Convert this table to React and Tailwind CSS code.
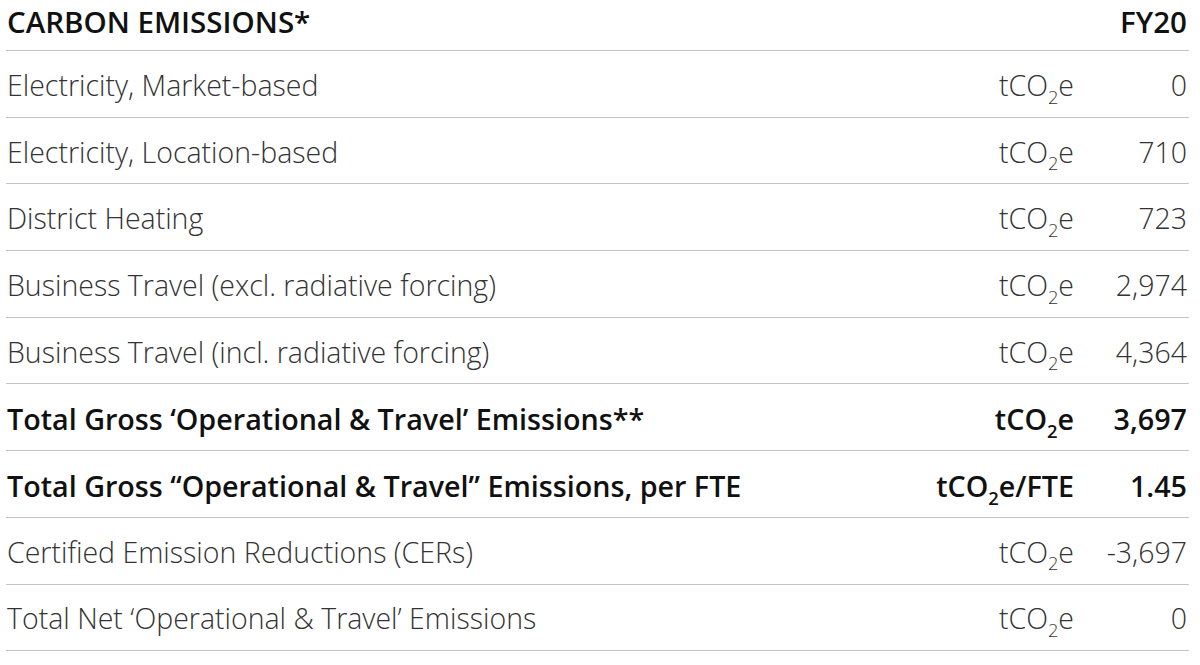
import React from 'react';

const rows = [
  { label: 'Electricity, Market-based', unit: 'tCO2e', value: '0' },
  { label: 'Electricity, Location-based', unit: 'tCO2e', value: '710' },
  { label: 'District Heating', unit: 'tCO2e', value: '723' },
  { label: 'Business Travel (excl. radiative forcing)', unit: 'tCO2e', value: '2,974' },
  { label: 'Business Travel (incl. radiative forcing)', unit: 'tCO2e', value: '4,364' },
  { label: 'Total Gross ‘Operational & Travel’ Emissions**', unit: 'tCO2e', value: '3,697', bold: true },
  { label: 'Total Gross “Operational & Travel” Emissions, per FTE', unit: 'tCO2e/FTE', value: '1.45', bold: true },
  { label: 'Certified Emission Reductions (CERs)', unit: 'tCO2e', value: '-3,697' },
  { label: 'Total Net ‘Operational & Travel’ Emissions', unit: 'tCO2e', value: '0' },
];

// tCO2e with the little subscript 2
const Unit = ({ text }) => {
  const rest = text.replace('tCO2e', '');
  return (
    <span className="whitespace-nowrap">
      tCO<sub className="relative -bottom-[0.42em] text-[0.64em] leading-none">2</sub>e{rest}
    </span>
  );
};

export default function App() {
  return (
    <div className="w-[1200px] h-[665px] bg-white pl-[6px] pr-[11px] font-['Open_Sans',sans-serif]">
      <div className="grid grid-cols-[1fr_auto_115px] items-center h-[51px] pb-[7px] border-b border-[#c4c4c4] text-[29.5px] font-semibold text-[#111]">
        <div className="pl-[1px]">CARBON EMISSIONS*</div>
        <div />
        <div className="text-right pr-[2px]">FY20</div>
      </div>
      {rows.map((r, i) => (
        <div
          key={i}
          className={`grid grid-cols-[1fr_auto_115px] items-center h-[66.7px] pt-[3px] border-b border-[#c4c4c4] ${
            r.bold ? 'text-[28.7px] font-semibold text-[#111]' : 'text-[28.5px] font-light text-[#333]'
          }`}
        >
          <div className="pl-[1px] whitespace-nowrap">{r.label}</div>
          <div className="text-right">
            <Unit text={r.unit} />
          </div>
          <div className="text-right pr-[2px]">{r.value}</div>
        </div>
      ))}
    </div>
  );
}
